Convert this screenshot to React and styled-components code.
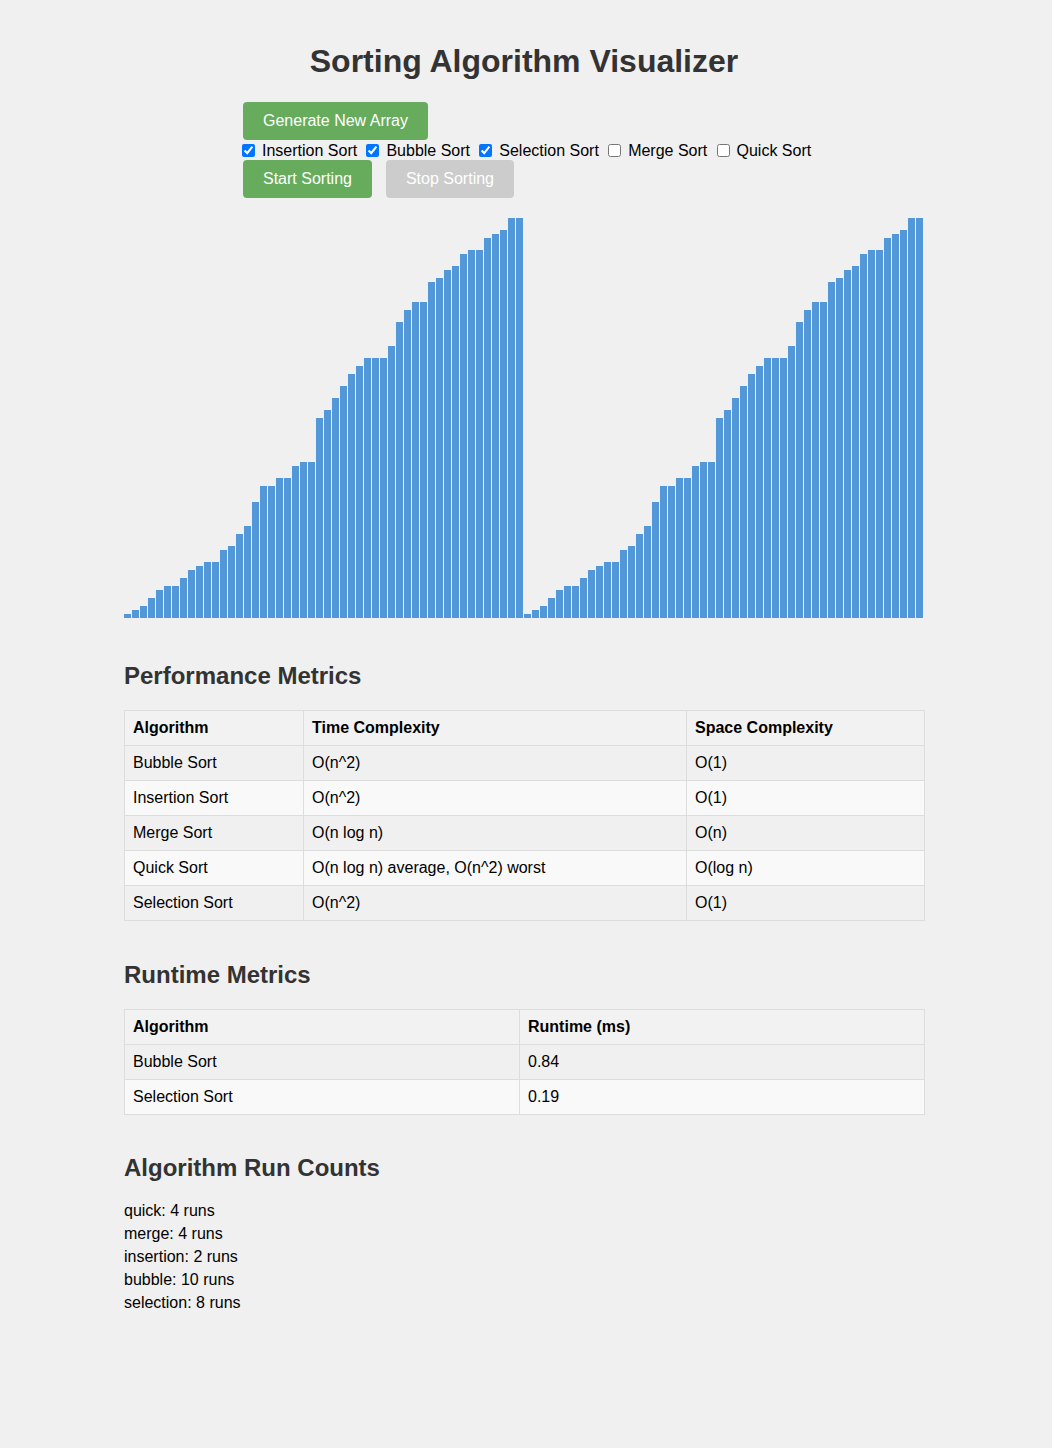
import React from 'react';
import styled, { createGlobalStyle } from 'styled-components';

const GlobalStyle = createGlobalStyle`
    body {
        margin: 0;
        padding: 0 4px 0 0;
        background-color: #f0f0f0;
        font-family: "Liberation Sans", Arial, sans-serif;
        color: #000;
    }
`

const Page = styled.div`
    width: 800px;
    margin: 0 auto;
    padding: 20px 0 60px;
`

const Title = styled.h1`
    text-align: center;
    font-size: 32px;
    line-height: 37px;
    color: #333;
    margin: 23px 0 22px;
`

const Controls = styled.div`
    display: flex;
    flex-direction: column;
    align-items: flex-start;
    width: fit-content;
    margin-left: 114px;
`

const ButtonRow = styled.div`
    display: flex;
    gap: 14px;
    padding-left: 5px;
`

const Button = styled.button`
    padding: 10px 20px;
    font-family: inherit;
    font-size: 16px;
    line-height: 18px;
    color: #fff;
    border: none;
    border-radius: 4px;
    background-color: ${p => (p.disabled ? '#cccccc' : '#66ac5c')};
    cursor: ${p => (p.disabled ? 'default' : 'pointer')};
`

const CheckRow = styled.div`
    display: flex;
    align-items: center;
    height: 20px;
    padding-top: 1px;
    box-sizing: border-box;
    font-size: 16px;
    line-height: 18px;
    white-space: nowrap;
`

const CheckItem = styled.label`
    display: inline-flex;
    align-items: center;
    margin-right: 5.25px;

    input {
        margin: 3px 3px 3px 4px;
    }
    span {
        margin-left: 4px;
    }
`

const Charts = styled.div`
    display: flex;
    margin-top: 20px;
`

const Chart = styled.div`
    display: flex;
    align-items: flex-end;
    width: 400px;
    height: 400px;
`

const Bar = styled.div.attrs(p => ({ style: { height: `${p.$h}px` } }))`
    width: 7px;
    margin-right: 1px;
    background-color: #5297d7;
`

const Heading = styled.h2`
    font-size: 24px;
    line-height: 28px;
    color: #333;
    margin: ${p => p.$top}px 0 20px;
`

const Table = styled.table`
    width: 100%;
    border-collapse: collapse;
    table-layout: fixed;

    th, td {
        border: 1px solid #ddd;
        padding: 8px;
        text-align: left;
        font-size: 16px;
        line-height: 18px;
    }
    th {
        background-color: #f2f2f2;
    }
    tbody tr:nth-child(even) {
        background-color: #f9f9f9;
    }
`

const Col = styled.col`
    width: ${p => p.$w}px;
`

const Counts = styled.div`
    margin-top: -3px;
    font-size: 16px;
    line-height: 23px;
`

const values = [
    1, 2, 3, 5, 7, 8, 8, 10, 12, 13, 14, 14, 17, 18, 21, 23, 29, 33, 33, 35,
    35, 38, 39, 39, 50, 52, 55, 58, 61, 63, 65, 65, 65, 68, 74, 77, 79, 79, 84, 85,
    87, 88, 91, 92, 92, 95, 96, 97, 100, 100,
]

const algos = [
    { name: 'Insertion Sort', on: true },
    { name: 'Bubble Sort', on: true },
    { name: 'Selection Sort', on: true },
    { name: 'Merge Sort', on: false },
    { name: 'Quick Sort', on: false },
]

const complexity = [
    ['Bubble Sort', 'O(n^2)', 'O(1)'],
    ['Insertion Sort', 'O(n^2)', 'O(1)'],
    ['Merge Sort', 'O(n log n)', 'O(n)'],
    ['Quick Sort', 'O(n log n) average, O(n^2) worst', 'O(log n)'],
    ['Selection Sort', 'O(n^2)', 'O(1)'],
]

const runtimes = [
    ['Bubble Sort', '0.84'],
    ['Selection Sort', '0.19'],
]

const runs = [
    ['quick', 4],
    ['merge', 4],
    ['insertion', 2],
    ['bubble', 10],
    ['selection', 8],
]

export default function App() {
    return (
        <>
            <GlobalStyle />
            <Page>
                <Title>Sorting Algorithm Visualizer</Title>
                <Controls>
                    <ButtonRow>
                        <Button>Generate New Array</Button>
                    </ButtonRow>
                    <CheckRow>
                        {algos.map(a => (
                            <CheckItem key={a.name}>
                                <input type='checkbox' defaultChecked={a.on} />
                                <span>{a.name}</span>
                            </CheckItem>
                        ))}
                    </CheckRow>
                    <ButtonRow>
                        <Button>Start Sorting</Button>
                        <Button disabled>Stop Sorting</Button>
                    </ButtonRow>
                </Controls>

                <Charts>
                    {[0, 1].map(c => (
                        <Chart key={c}>
                            {values.map((v, i) => <Bar key={i} $h={v * 4} />)}
                        </Chart>
                    ))}
                </Charts>

                <Heading $top={44}>Performance Metrics</Heading>
                <Table>
                    <colgroup>
                        <Col $w={179} />
                        <Col $w={383} />
                        <Col $w={238} />
                    </colgroup>
                    <thead>
                        <tr>
                            <th>Algorithm</th>
                            <th>Time Complexity</th>
                            <th>Space Complexity</th>
                        </tr>
                    </thead>
                    <tbody>
                        {complexity.map(r => (
                            <tr key={r[0]}>
                                <td>{r[0]}</td>
                                <td>{r[1]}</td>
                                <td>{r[2]}</td>
                            </tr>
                        ))}
                    </tbody>
                </Table>

                <Heading $top={40}>Runtime Metrics</Heading>
                <Table>
                    <colgroup>
                        <Col $w={395} />
                        <Col $w={405} />
                    </colgroup>
                    <thead>
                        <tr>
                            <th>Algorithm</th>
                            <th>Runtime (ms)</th>
                        </tr>
                    </thead>
                    <tbody>
                        {runtimes.map(r => (
                            <tr key={r[0]}>
                                <td>{r[0]}</td>
                                <td>{r[1]}</td>
                            </tr>
                        ))}
                    </tbody>
                </Table>

                <Heading $top={39}>Algorithm Run Counts</Heading>
                <Counts>
                    {runs.map(([k, n]) => (
                        <div key={k}>{k}: {n} runs</div>
                    ))}
                </Counts>
            </Page>
        </>
    )
}
